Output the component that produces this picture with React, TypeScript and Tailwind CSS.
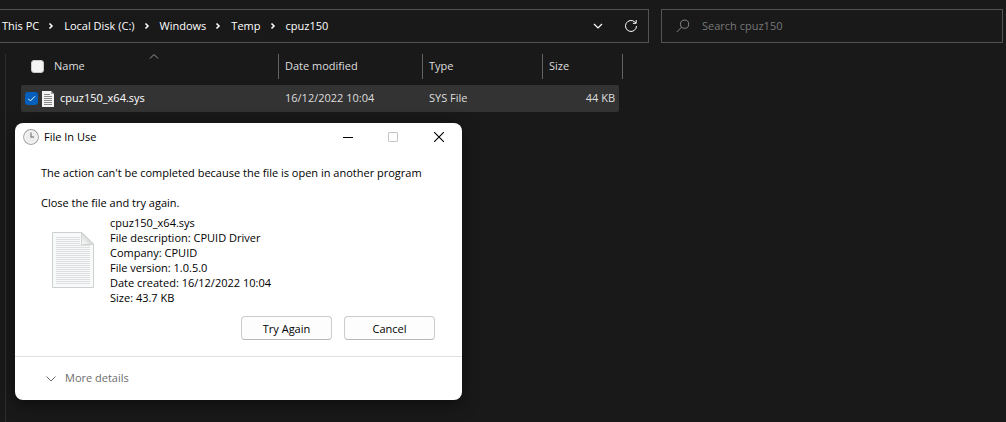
import React from 'react';

const breadcrumbs = ['This PC', 'Local Disk (C:)', 'Windows', 'Temp', 'cpuz150'];

const fileDetails = [
  'cpuz150_x64.sys',
  'File description: CPUID Driver',
  'Company: CPUID',
  'File version: 1.0.5.0',
  'Date created: 16/12/2022 10:04',
  'Size: 43.7 KB',
];

const Chevron: React.FC<{ d: string; className?: string }> = ({ d, className }) => (
  <svg viewBox="0 0 12 12" fill="none" stroke="currentColor" className={className} aria-hidden="true">
    <path d={d} />
  </svg>
);

const AddressBar = () => (
  <nav className="flex h-[34px] flex-1 items-center border-y border-r border-[#535353] pl-0.5 text-white">
    <ol className="flex items-center">
      {breadcrumbs.map((name, i) => (
        <li key={name} className="flex items-center">
          {i > 0 && <Chevron d="M4.5 3.5 7 6 4.5 8.5" className="ml-1.5 mr-[7px] size-3 stroke-[1.6]" />}
          <a href="#">{name}</a>
        </li>
      ))}
    </ol>
    <button type="button" aria-label="Previous locations" className="ml-auto mr-5">
      <Chevron d="M2 4 6 8 10 4" className="size-3 stroke-[1.2]" />
    </button>
    <button type="button" aria-label="Refresh" className="mr-2.5">
      <svg viewBox="0 0 14 14" fill="none" stroke="currentColor" className="size-3.5" aria-hidden="true">
        <path d="M12.5 7A5.5 5.5 0 1 1 10.8 3L12 4.2" />
        <path d="M12.2 1V4.3H8.9" />
      </svg>
    </button>
  </nav>
);

const SearchBox = () => (
  <label className="flex h-[34px] w-[342px] items-center gap-3 border border-[#535353] pl-3.5">
    <svg viewBox="0 0 14 14" fill="none" stroke="#858585" className="size-3.5" aria-hidden="true">
      <circle cx="8.6" cy="5.2" r="4.1" />
      <path d="M5.6 8.2 .7 13.1" />
    </svg>
    <input
      type="search"
      aria-label="Search cpuz150"
      placeholder="Search cpuz150"
      className="min-w-0 flex-1 bg-transparent outline-none placeholder:text-[#777777]"
    />
  </label>
);

const FileTable = () => (
  <table className="ml-[15px] w-[602px] table-fixed border-separate border-spacing-x-0 border-spacing-y-1.5 text-left text-[#dedede]">
    <colgroup>
      <col className="w-[258px]" />
      <col className="w-36" />
      <col className="w-[120px]" />
      <col className="w-[76px]" />
      <col className="w-1" />
    </colgroup>
    <thead>
      <tr className="h-[25px]">
        <th className="relative border-r border-[#636363] p-0 font-normal">
          <Chevron d="M2 7.5 6 3.5 10 7.5" className="absolute -top-[3px] left-[127px] size-3 text-[#9a9a9a]" />
          <label className="flex items-center gap-2.5 pl-2.5">
            <input type="checkbox" className="size-[13px] appearance-none rounded-[3px] border border-[#c8c8c8] bg-[#f3f3f3]" />
            Name
          </label>
        </th>
        <th className="border-r border-[#636363] p-0 pl-1.5 font-normal">Date modified</th>
        <th className="border-r border-[#636363] p-0 pl-1.5 font-normal">Type</th>
        <th colSpan={2} className="border-r border-[#636363] p-0 pl-1.5 font-normal">Size</th>
      </tr>
    </thead>
    <tbody>
      <tr className="h-[27px]">
        <td className="rounded-l-xs bg-[#333333] p-0 text-white">
          <label className="flex items-center pl-1">
            <span className="grid size-[13px]">
              <input type="checkbox" defaultChecked className="col-start-1 row-start-1 size-[13px] appearance-none rounded-[3px] bg-[#0560bd]" />
              <Chevron d="M3 6.2 5 8.2 9.2 4" className="pointer-events-none col-start-1 row-start-1 size-[13px] stroke-[.9]" />
            </span>
            <svg viewBox="0 0 12 16" className="ml-1 mr-1.5 h-4 w-3" aria-hidden="true">
              <path d="M0 0H9L12 3V16H0Z" fill="#f4f4f4" />
              <path d="M9 0V3H12Z" fill="#9c9c9c" />
              <path d="M2 3.5H8M2 5.5H10M2 7.5H10M2 9.5H10M2 11.5H10M2 13.5H10" stroke="#8b8b8b" />
            </svg>
            cpuz150_x64.sys
          </label>
        </td>
        <td className="bg-[#333333] p-0 pl-1.5">16/12/2022 10:04</td>
        <td className="bg-[#333333] p-0 pl-1.5">SYS File</td>
        <td className="rounded-r-xs bg-[#333333] p-0 pr-1 text-right">44 KB</td>
      </tr>
    </tbody>
  </table>
);

const DocumentIcon = () => (
  <svg viewBox="0 0 42 56" fill="none" className="h-14 w-[42px]" aria-hidden="true">
    <defs>
      <linearGradient id="fold" x1="0" y1="1" x2="1" y2="0">
        <stop stopColor="#ffffff" />
        <stop offset=".5" stopColor="#dadada" />
      </linearGradient>
    </defs>
    <path d="M.5 .5H30L41.5 12V55.5H.5Z" fill="#f8f9f9" stroke="#cdd0d2" />
    <path
      d="M4 5.5H28M4 7.5H28M4 9.5H28M4 11.5H28M4 13.5H38M4 15.5H38M4 17.5H38M4 19.5H38M4 21.5H38M4 23.5H38M4 25.5H38M4 27.5H38M4 29.5H38M4 31.5H38M4 33.5H38M4 35.5H38M4 37.5H38M4 39.5H38M4 41.5H38M4 43.5H38M4 45.5H38M4 47.5H38M4 49.5H38M4 51.5H38"
      stroke="#dcdedf"
    />
    <path d="M29.5 .5V12.5H41.5Z" fill="url(#fold)" stroke="#c9cbcc" strokeWidth=".8" />
  </svg>
);

const FileInUseDialog = () => (
  <section
    role="dialog"
    aria-labelledby="dialog-title"
    className="absolute left-[15px] top-[123px] w-[447px] rounded-lg bg-white text-black shadow-[0_4px_16px_rgba(0,0,0,0.5)]"
  >
    <header className="flex h-7 items-center pl-2">
      <svg viewBox="0 0 16 16" fill="none" className="size-4" aria-hidden="true">
        <circle cx="8" cy="8" r="7.3" fill="#ededed" stroke="#a3a3a3" strokeWidth="1.2" />
        <circle cx="8" cy="8" r="6.2" stroke="#fafafa" />
        <path d="M8 3.5V8H11" stroke="#8c8c8c" strokeWidth="1.4" />
      </svg>
      <h1 id="dialog-title" className="ml-[5px] flex-1">File In Use</h1>
      <button type="button" aria-label="Minimize" className="flex w-[45px] justify-center">
        <svg viewBox="0 0 10 10" stroke="#000000" className="size-2.5"><path d="M0 5.5H10" /></svg>
      </button>
      <button type="button" aria-label="Maximize" disabled className="flex w-[45px] justify-center">
        <svg viewBox="0 0 10 10" fill="none" stroke="#c4c4c4" className="size-2.5"><rect x=".5" y=".5" width="9" height="9" rx=".5" /></svg>
      </button>
      <button type="button" aria-label="Close" className="flex w-[47px] justify-center">
        <svg viewBox="0 0 10 10" stroke="#000000" strokeWidth="1.1" className="size-2.5"><path d="M0 0 10 10M10 0 0 10" /></svg>
      </button>
    </header>

    <div className="pb-4 pl-[26px] pr-[27px] pt-3.5 leading-[15px]">
      <p>The action can't be completed because the file is open in another program</p>
      <p className="mt-[15px]">Close the file and try again.</p>
      <div className="mt-[5px] flex items-center gap-4 pl-[11px]">
        <DocumentIcon />
        <ul>
          {fileDetails.map((line) => (
            <li key={line}>{line}</li>
          ))}
        </ul>
      </div>
      <div className="mt-[11px] flex justify-end gap-3">
        <button type="button" className="h-6 w-[91px] rounded-sm border border-[#cccccc] border-b-[#b8b8b8] bg-[#fdfdfd]">Try Again</button>
        <button type="button" className="h-6 w-[91px] rounded-sm border border-[#cccccc] border-b-[#b8b8b8] bg-[#fdfdfd]">Cancel</button>
      </div>
    </div>

    <footer className="border-t border-[#dfdfdf] pl-[30px]">
      <button type="button" className="flex h-[43px] items-center gap-2 text-[#6d6d6d]">
        <Chevron d="M1.5 3.5 6 8 10.5 3.5" className="size-3" />
        More details
      </button>
    </footer>
  </section>
);

export default function App() {
  return (
    <main className="relative flex min-h-screen flex-col bg-[#191919] pt-[9px] font-['Open_Sans',sans-serif] text-[11px]">
      <div className="flex gap-3 pr-[3px]">
        <AddressBar />
        <SearchBox />
      </div>
      <div className="ml-[5px] mt-[11px] flex-1 border-l border-[#2d2d2d]">
        <div className="-mt-1.5">
          <FileTable />
        </div>
      </div>
      <FileInUseDialog />
    </main>
  );
}
